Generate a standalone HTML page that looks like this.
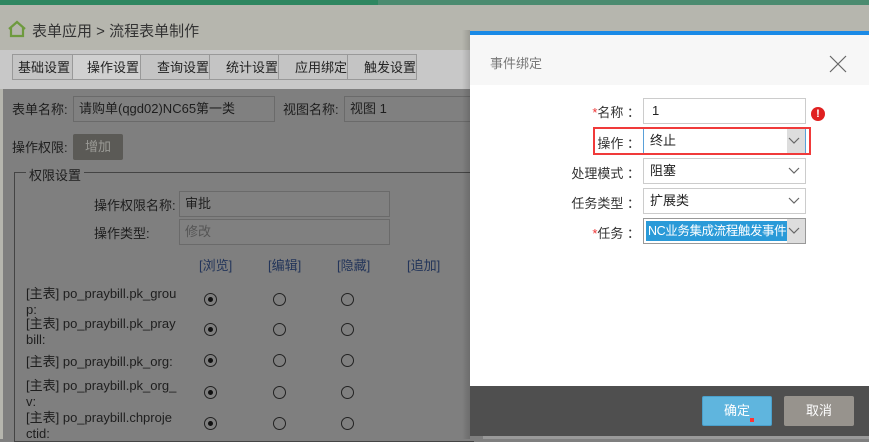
<!DOCTYPE html>
<html><head><meta charset="utf-8"><style>
*{margin:0;padding:0;box-sizing:border-box}
body{width:869px;height:439px;overflow:hidden;position:relative;background:#7f7f7f;font-family:"Liberation Sans","Noto Sans CJK SC",sans-serif;font-size:13px;color:#1e1e1e}
.a{position:absolute}
.tab{position:absolute;top:54px;height:26px;line-height:26px;font-size:13px;color:#222;background:#c4c4c4;border:1px solid #999}
.inp{position:absolute;border:1px solid #6a6a6a;background:#808080;height:26px;line-height:24px;padding-left:5px}
.rad{position:absolute;width:13px;height:13px;border:1px solid #222;border-radius:50%}
.rad.on::after{content:"";position:absolute;left:3px;top:3px;width:5px;height:5px;border-radius:50%;background:#111}
.lbl{position:absolute;font-size:13px;line-height:16px;color:#1e1e1e}
.dl{position:absolute;right:229px;font-size:13px;color:#333;text-align:right;white-space:nowrap}
.di{position:absolute;left:643px;width:163px;height:26px;border:1px solid #ccc;background:#fff;line-height:24px;padding-left:6px;font-size:13px;color:#222}
.chev{position:absolute;right:4px;top:4px;width:14px;height:14px}
</style></head><body>
<div class="a" style="left:0;top:0;width:869px;height:5px;background:#2e8660"></div>
<div class="a" style="left:378px;top:0;width:491px;height:5px;background:#4b8b70"></div>
<div class="a" style="left:0;top:5px;width:869px;height:45px;background:#b6b6ae"></div>
<div class="a" style="left:0;top:50px;width:869px;height:39px;background:#c8c8c8"></div>
<div class="a" style="left:0;top:89px;width:3px;height:350px;background:#b6b6ae"></div>
<svg class="a" style="left:7px;top:20px" width="20" height="18"><path d="M2 9 L10 2 L18 9 M4 8 V16 H16 V8" fill="none" stroke="#6e9a3e" stroke-width="2.2"/></svg>
<div class="a" style="left:32px;top:20px;font-size:15px;color:#333">表单应用 &gt; 流程表单制作</div>
<div class="tab" style="left:12px;width:62px;padding-left:5px">基础设置</div>
<div class="tab" style="left:72px;width:80px;padding-left:14px;background:#d0d0d0">操作设置</div>
<div class="tab" style="left:140px;width:80px;padding-left:16px">查询设置</div>
<div class="tab" style="left:209px;width:80px;padding-left:16px">统计设置</div>
<div class="tab" style="left:278px;width:70px;padding-left:16px">应用绑定</div>
<div class="tab" style="left:347px;width:70px;padding-left:16px">触发设置</div>
<div class="lbl" style="left:12px;top:102px">表单名称:</div>
<div class="inp" style="left:73px;top:96px;width:202px">请购单(qgd02)NC65第一类</div>
<div class="lbl" style="left:283px;top:102px">视图名称:</div>
<div class="inp" style="left:344px;top:96px;width:130px">视图 1</div>
<div class="lbl" style="left:12px;top:140px">操作权限:</div>
<div class="a" style="left:73px;top:134px;width:50px;height:26px;background:#5b5a56;border-radius:2px;color:#9a9a95;text-align:center;line-height:26px">增加</div>
<div class="a" style="left:14px;top:172px;width:460px;height:270px;border:1px solid #444;border-right:none"></div>
<div class="a" style="left:26px;top:165px;background:#7f7f7f;padding:0 3px;font-size:13px">权限设置</div>
<div class="lbl" style="left:94px;top:198px">操作权限名称:</div>
<div class="inp" style="left:179px;top:191px;width:211px">审批</div>
<div class="lbl" style="left:94px;top:226px">操作类型:</div>
<div class="inp" style="left:179px;top:219px;width:211px;color:#555">修改</div>
<div class="lbl" style="left:199px;top:258px;color:#23355a">[浏览]</div>
<div class="lbl" style="left:268px;top:258px;color:#23355a">[编辑]</div>
<div class="lbl" style="left:337px;top:258px;color:#23355a">[隐藏]</div>
<div class="lbl" style="left:407px;top:258px;color:#23355a">[追加]</div>
<div class="lbl" style="left:26px;top:286px">[主表] po_praybill.pk_grou<br>p:</div>
<div class="lbl" style="left:26px;top:316px">[主表] po_praybill.pk_pray<br>bill:</div>
<div class="lbl" style="left:26px;top:354px">[主表] po_praybill.pk_org:</div>
<div class="lbl" style="left:26px;top:378px">[主表] po_praybill.pk_org_<br>v:</div>
<div class="lbl" style="left:26px;top:410px">[主表] po_praybill.chproje<br>ctid:</div>
<div class="rad on" style="left:204px;top:293px"></div><div class="rad" style="left:273px;top:293px"></div><div class="rad" style="left:341px;top:293px"></div>
<div class="rad on" style="left:204px;top:323px"></div><div class="rad" style="left:273px;top:323px"></div><div class="rad" style="left:341px;top:323px"></div>
<div class="rad on" style="left:204px;top:354px"></div><div class="rad" style="left:273px;top:354px"></div><div class="rad" style="left:341px;top:354px"></div>
<div class="rad on" style="left:204px;top:386px"></div><div class="rad" style="left:273px;top:386px"></div><div class="rad" style="left:341px;top:386px"></div>
<div class="rad on" style="left:204px;top:417px"></div><div class="rad" style="left:273px;top:417px"></div><div class="rad" style="left:341px;top:417px"></div>
<!-- dialog -->
<div class="a" style="left:462px;top:30px;width:8px;height:409px;background:linear-gradient(90deg,rgba(0,0,0,0),rgba(0,0,0,.15))"></div>
<div class="a" style="left:470px;top:31px;width:399px;height:4px;background:#1a8ae6"></div>
<div class="a" style="left:470px;top:35px;width:399px;height:50px;background:#f7f7f7"></div>
<div class="a" style="left:490px;top:53px;font-size:13px;color:#777">事件绑定</div>
<svg class="a" style="left:829px;top:55px" width="18" height="18"><path d="M1 1L17 17M17 1L1 17" stroke="#666" stroke-width="1.2"/></svg>
<div class="a" style="left:470px;top:85px;width:399px;height:301px;background:#fff"></div>
<div class="dl" style="top:102px"><span style="color:#e33">*</span>名称 ：</div>
<div class="di" style="top:98px;padding-left:8px">1</div>
<div class="a" style="left:811px;top:107px;width:14px;height:14px;border-radius:50%;background:#e02020;color:#fff;font-size:11px;font-weight:bold;text-align:center;line-height:14px">!</div>
<div class="dl" style="top:133px">操作 ：</div>
<div class="di" style="top:128px;border-color:#5aa0d8">终止<div class="a" style="right:0;top:0;width:18px;height:24px;background:#ddd"></div><svg class="chev" viewBox="0 0 14 14"><path d="M2 5l5 5 5-5" fill="none" stroke="#666" stroke-width="1.2"/></svg></div>
<div class="a" style="left:593px;top:127px;width:218px;height:28px;border:2px solid #f03a3a"></div>
<div class="dl" style="top:163px">处理模式 ：</div>
<div class="di" style="top:158px">阻塞<svg class="chev" viewBox="0 0 14 14"><path d="M2 5l5 5 5-5" fill="none" stroke="#666" stroke-width="1.2"/></svg></div>
<div class="dl" style="top:193px">任务类型 ：</div>
<div class="di" style="top:188px">扩展类<svg class="chev" viewBox="0 0 14 14"><path d="M2 5l5 5 5-5" fill="none" stroke="#666" stroke-width="1.2"/></svg></div>
<div class="dl" style="top:223px"><span style="color:#e33">*</span>任务 ：</div>
<div class="di" style="top:218px;padding:2px;border-color:#999"><div style="background:#2a9ad8;color:#fff;height:20px;line-height:20px;width:142px;padding-left:2px;font-size:12.5px;letter-spacing:-0.4px;white-space:nowrap;overflow:hidden">NC业务集成流程触发事件</div><div class="a" style="right:0;top:0;width:18px;height:24px;background:#ddd"></div><svg class="chev" viewBox="0 0 14 14"><path d="M2 5l5 5 5-5" fill="none" stroke="#666" stroke-width="1.2"/></svg></div>
<div class="a" style="left:470px;top:386px;width:399px;height:50px;background:#4f4f4f"></div>
<div class="a" style="left:702px;top:396px;width:70px;height:30px;background:#5fb5de;border:1px solid #4aa0cc;border-radius:2px;color:#fff;text-align:center;line-height:28px">确定</div>
<div class="a" style="left:750px;top:418px;width:4px;height:4px;background:#f33"></div>
<div class="a" style="left:784px;top:396px;width:70px;height:30px;background:#97938d;border-radius:2px;color:#fff;text-align:center;line-height:30px">取消</div>
<div class="a" style="left:483px;top:436px;width:386px;height:3px;background:#999"></div>
</body></html>
